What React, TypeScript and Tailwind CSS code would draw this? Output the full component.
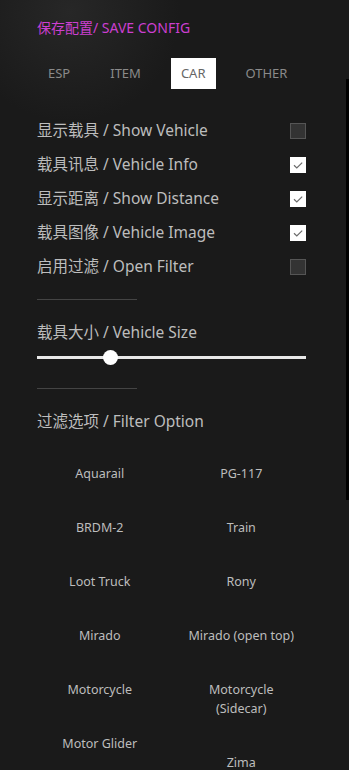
import React, { useState } from 'react';

const font = { fontFamily: '"Noto Sans", "Noto Sans CJK SC", sans-serif' };

const tabs = ['ESP', 'ITEM', 'CAR', 'OTHER'];

const options = [
  { label: '显示载具 / Show Vehicle', checked: false },
  { label: '载具讯息 / Vehicle Info', checked: true },
  { label: '显示距离 / Show Distance', checked: true },
  { label: '载具图像 / Vehicle Image', checked: true },
  { label: '启用过滤 / Open Filter', checked: false },
];

const leftVehicles = ['Aquarail', 'BRDM-2', 'Loot Truck', 'Mirado', 'Motorcycle', 'Motor Glider'];
const rightVehicles = ['PG-117', 'Train', 'Rony', 'Mirado (open top)', 'Motorcycle (Sidecar)', 'Zima'];

function Checkbox({ checked }: { checked: boolean }) {
  if (!checked) {
    return <div className="w-4 h-4 bg-[#333333] border border-[#555555]" />;
  }
  return (
    <div className="w-4 h-4 bg-white flex items-center justify-center">
      <svg width="16" height="16" viewBox="0 0 16 16" fill="none">
        <path d="M4 8.3 L6.8 11 L12.2 5.6" stroke="#6b6b6b" strokeWidth="1.2" />
      </svg>
    </div>
  );
}

function VehicleColumn({ items }: { items: string[] }) {
  return (
    <div className="w-[142px] flex flex-col">
      {items.map((v) => (
        <div
          key={v}
          className="px-3 py-[17.5px] text-center text-[12.5px] leading-[19px] text-[#bdbdbd]"
        >
          {v}
        </div>
      ))}
    </div>
  );
}

export default function App() {
  const [active, setActive] = useState('CAR');
  const size = 0.275;

  return (
    <div
      className="relative w-[349px] h-[770px] overflow-hidden bg-[#1a1a1a] bg-[radial-gradient(circle_at_70px_12px,#272727,#1a1a1a_110px)]"
      style={font}
    >
      <div className="px-[37px] pt-[18px]">
        <div className="text-[14px] leading-[20px] text-[#cc3fd1]">保存配置/ SAVE CONFIG</div>

        {/* Tabs */}
        <div className="mt-[20px] flex gap-[20px] ml-[1px]">
          {tabs.map((t) => (
            <button
              key={t}
              onClick={() => setActive(t)}
              className={
                t === active
                  ? 'h-[31px] px-[10px] bg-white text-[#666666] text-[13px]'
                  : 'h-[31px] px-[10px] text-[#8a8a8a] text-[13px]'
              }
            >
              {t}
            </button>
          ))}
        </div>

        {/* Toggles */}
        <div className="mt-[25px] flex flex-col">
          {options.map((o) => (
            <div key={o.label} className="h-[34px] flex items-center justify-between pr-[6px]">
              <span className="text-[15.5px] text-[#bdbdbd]">{o.label}</span>
              <Checkbox checked={o.checked} />
            </div>
          ))}
        </div>

        <div className="mt-[15px] w-[100px] h-px bg-[#444444]" />

        <div className="mt-[21px] text-[15.5px] leading-[22px] text-[#bdbdbd]">载具大小 / Vehicle Size</div>

        {/* Slider */}
        <div className="relative mt-[7px] h-[15px] w-[269px] flex items-center">
          <div className="w-full h-[3px] bg-[#e8e8e8]" />
          <div
            className="absolute top-0 w-[15px] h-[15px] rounded-full bg-white"
            style={{ left: `calc(${size * 100}% - 7.5px)` }}
          />
        </div>

        <div className="mt-[23px] w-[100px] h-px bg-[#444444]" />

        <div className="mt-[21px] text-[15.5px] leading-[22px] text-[#bdbdbd]">过滤选项 / Filter Option</div>

        {/* Filter options */}
        <div className="mt-[14px] -ml-[8px] flex items-start">
          <VehicleColumn items={leftVehicles} />
          <VehicleColumn items={rightVehicles} />
        </div>
      </div>

      {/* scrollbar */}
      <div className="absolute right-0 top-[79px] w-[3px] h-[421px] bg-black" />
    </div>
  );
}
